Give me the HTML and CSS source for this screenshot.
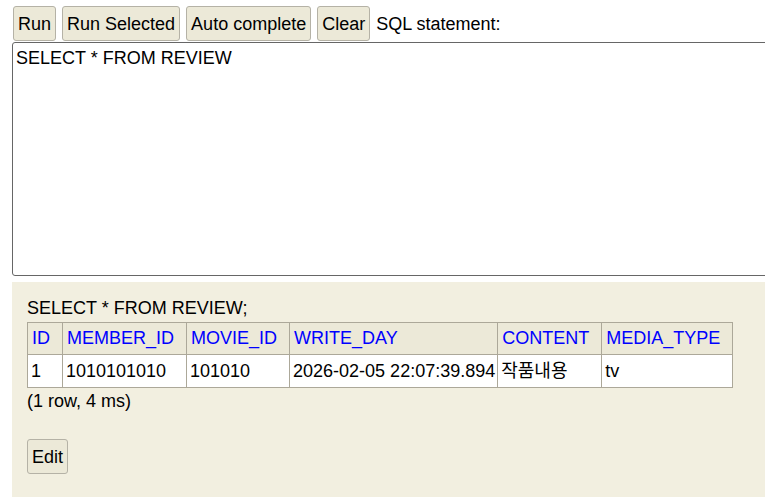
FILE: index.html
```html
<!DOCTYPE html>
<html lang="ko">
<head>
    <meta charset="UTF-8">
    <title>H2 Console</title>
    <link rel="stylesheet" href="styles.css">
</head>
<body>
    <div class="query">
        <div class="toolbar">
            <button class="btn">Run</button>
            <button class="btn">Run Selected</button>
            <button class="btn">Auto complete</button>
            <button class="btn">Clear</button>
            <span class="label">SQL statement:</span>
        </div>
        <textarea class="sql">SELECT * FROM REVIEW</textarea>
    </div>

    <div class="result">
        <p class="stmt">SELECT * FROM REVIEW;</p>
        <table class="grid">
            <tr>
                <th>ID</th>
                <th>MEMBER_ID</th>
                <th>MOVIE_ID</th>
                <th>WRITE_DAY</th>
                <th>CONTENT</th>
                <th>MEDIA_TYPE</th>
            </tr>
            <tr>
                <td>1</td>
                <td>1010101010</td>
                <td>101010</td>
                <td>2026-02-05 22:07:39.894</td>
                <td>작품내용</td>
                <td>tv</td>
            </tr>
        </table>
        <p class="info">(1 row, 4 ms)</p>
        <button class="btn edit">Edit</button>
    </div>
</body>
</html>
```

FILE: styles.css
```css
html, body {
    margin: 0;
    padding: 0;
    background-color: #fff;
    overflow: hidden;
}
body {
    font-family: "Liberation Sans", Arial, "Noto Sans CJK KR", sans-serif;
    font-size: 18px;
    line-height: 21px;
    color: #000;
}
.query {
    padding: 6px 0 0 12px;
    overflow: hidden;
}
.toolbar {
    display: flex;
    align-items: center;
    gap: 6px;
    padding-left: 1px;
    height: 36px;
}
.btn {
    font-family: inherit;
    font-size: 18px;
    line-height: 21px;
    height: 35px;
    padding: 7px 4px 5px 4px;
    margin: 0;
    background-color: #ece9d8;
    border: 1px solid #b5b2a6;
    border-radius: 3px;
    color: #000;
}
.toolbar .btn {
    align-self: flex-start;
}
.label {
    padding-top: 1px;
}
.sql {
    display: block;
    box-sizing: border-box;
    width: calc(100% + 20px);
    height: 234px;
    margin: 0;
    padding: 5px 3px 3px 3px;
    font-family: inherit;
    font-size: 18px;
    line-height: 21px;
    border: 1px solid #666;
    border-radius: 3px;
    resize: none;
    outline: none;
}
.result {
    box-sizing: border-box;
    margin: 6px 0 0 12px;
    padding: 16px 15px 0 15px;
    background-color: #f2efe0;
    height: 215px;
}
.stmt {
    margin: 0 0 3px 0;
}
.grid {
    border-collapse: collapse;
    background-color: #fff;
}
.grid th, .grid td {
    border: 1px solid #aca899;
    text-align: left;
    white-space: nowrap;
}
.grid th {
    background-color: #ece9d8;
    color: #0000ff;
    font-weight: normal;
    padding: 5px 12px 5px 4px;
}
.grid td {
    padding: 6px 2px 5px 3px;
}
.info {
    margin: 3px 0 0 0;
}
.edit {
    margin-top: 27px;
}
```
